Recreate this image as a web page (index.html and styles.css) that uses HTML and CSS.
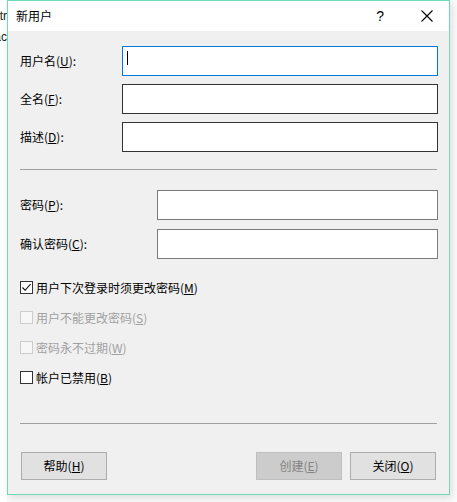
FILE: index.html
```html
<!DOCTYPE html>
<html lang="zh-CN">
<head>
<meta charset="UTF-8">
<title>新用户</title>
<link rel="stylesheet" href="styles.css">
</head>
<body>
<div class="desk">
  <div class="behind">
    <span class="behind-line">Setr</span>
    <span class="behind-line">Blac</span>
  </div>

  <div class="dialog">
    <div class="titlebar">
      <span class="title">新用户</span>
      <span class="help-btn">?</span>
      <svg class="close-btn" width="12" height="12" viewBox="0 0 12 12">
        <path d="M0.5 0.5 L11.5 11.5 M11.5 0.5 L0.5 11.5" stroke="#000" stroke-width="1.1" fill="none"/>
      </svg>
    </div>

    <div class="content">
      <div class="fields">
        <div class="row">
          <label class="label">用户名(<u>U</u>):</label>
          <div class="input focused"><span class="caret"></span></div>
        </div>
        <div class="row">
          <label class="label">全名(<u>F</u>):</label>
          <div class="input dark"></div>
        </div>
        <div class="row">
          <label class="label">描述(<u>D</u>):</label>
          <div class="input dark"></div>
        </div>
      </div>

      <div class="sep first-sep"></div>

      <div class="fields pw">
        <div class="row">
          <label class="label">密码(<u>P</u>):</label>
          <div class="input"></div>
        </div>
        <div class="row">
          <label class="label">确认密码(<u>C</u>):</label>
          <div class="input"></div>
        </div>
      </div>

      <div class="checks">
        <div class="check">
          <span class="box">
            <svg width="11" height="11" viewBox="0 0 11 11"><path d="M1.5 5.5 L4.2 8.3 L9.6 2" stroke="#000" stroke-width="1.1" fill="none"/></svg>
          </span>
          <span>用户下次登录时须更改密码(<u>M</u>)</span>
        </div>
        <div class="check disabled">
          <span class="box"></span>
          <span>用户不能更改密码(<u>S</u>)</span>
        </div>
        <div class="check disabled">
          <span class="box"></span>
          <span>密码永不过期(<u>W</u>)</span>
        </div>
        <div class="check">
          <span class="box"></span>
          <span>帐户已禁用(<u>B</u>)</span>
        </div>
      </div>

      <div class="sep second-sep"></div>

      <div class="buttons">
        <button class="btn">帮助(<u>H</u>)</button>
        <div class="spacer"></div>
        <button class="btn off">创建(<u>E</u>)</button>
        <button class="btn">关闭(<u>O</u>)</button>
      </div>
    </div>
  </div>
</div>
</body>
</html>
```

FILE: styles.css
```css
body {
  margin: 0;
  padding: 0;
  background-color: #fbfbfb;
  font-family: "Noto Sans CJK SC", "Liberation Sans", sans-serif;
  font-size: 12px;
  color: #000;
}

.desk {
  display: flex;
  align-items: flex-start;
}

/* the window behind the dialog, only a sliver shows */
.behind {
  width: 7px;
  height: 502px;
  background-color: #fff;
  overflow: hidden;
  display: flex;
  flex-direction: column;
  align-items: flex-end;
  padding-top: 6px;
  box-sizing: border-box;
}

.behind-line {
  white-space: nowrap;
  line-height: 21px;
  color: #222;
  font-family: "Liberation Sans", sans-serif;
}

.dialog {
  width: 443px;
  height: 495px;
  border: 1px solid #6ddbb4;
  box-sizing: border-box;
  background-color: #f0f0f0;
  box-shadow: 2px 3px 8px rgba(0, 0, 0, 0.12);
  display: flex;
  flex-direction: column;
}

.titlebar {
  height: 30px;
  background-color: #fff;
  display: flex;
  align-items: center;
  padding-left: 8px;
}

.title {
  flex: 1;
  line-height: 16px;
}

.help-btn {
  font-family: "Liberation Sans", sans-serif;
  font-size: 14px;
  margin-right: 37px;
  line-height: 16px;
}

.close-btn {
  margin-right: 16px;
}

.content {
  padding: 15px 11px 0 12px;
}

.fields {
  display: flex;
  flex-direction: column;
  gap: 8px;
}

.fields.pw {
  gap: 9px;
}

.row {
  display: flex;
  align-items: center;
}

.label {
  width: 102px;
  line-height: 16px;
}

.pw .label {
  width: 137px;
}

u {
  text-decoration: underline;
  text-underline-offset: 1px;
}

.input {
  flex: 1;
  height: 30px;
  box-sizing: border-box;
  border: 1px solid #7a7a7a;
  background-color: #fff;
  position: relative;
}

.input.dark {
  border-color: #333;
}

.input.focused {
  border-color: #0078d7;
}

.caret {
  position: absolute;
  left: 4px;
  top: 4px;
  width: 1px;
  height: 14px;
  background-color: #000;
}

.sep {
  height: 1px;
  background-color: #a0a0a0;
  margin-right: 1px;
}

.first-sep {
  margin-top: 17px;
  margin-bottom: 20px;
}

.checks {
  display: flex;
  flex-direction: column;
  gap: 17px;
  margin-top: 22px;
}

.check {
  display: flex;
  align-items: center;
  height: 13px;
  gap: 3px;
  line-height: 16px;
}

.box {
  width: 13px;
  height: 13px;
  box-sizing: border-box;
  border: 1px solid #333;
  background-color: #fff;
  display: flex;
  align-items: center;
  justify-content: center;
}

.check.disabled {
  color: #a0a0a0;
}

.check.disabled .box {
  border-color: #cccccc;
  background-color: #f7f7f7;
}

.second-sep {
  margin-top: 39px;
}

.buttons {
  display: flex;
  gap: 8px;
  margin-top: 28px;
  padding: 0 2px 0 1px;
}

.spacer {
  flex: 1;
}

.btn {
  width: 86px;
  height: 28px;
  box-sizing: border-box;
  background-color: #e1e1e1;
  border: 1px solid #adadad;
  font-family: "Noto Sans CJK SC", "Liberation Sans", sans-serif;
  font-size: 12px;
  color: #000;
  padding: 0;
  line-height: 16px;
}

.btn.off {
  background-color: #cccccc;
  border-color: #bfbfbf;
  color: #838383;
}
```
